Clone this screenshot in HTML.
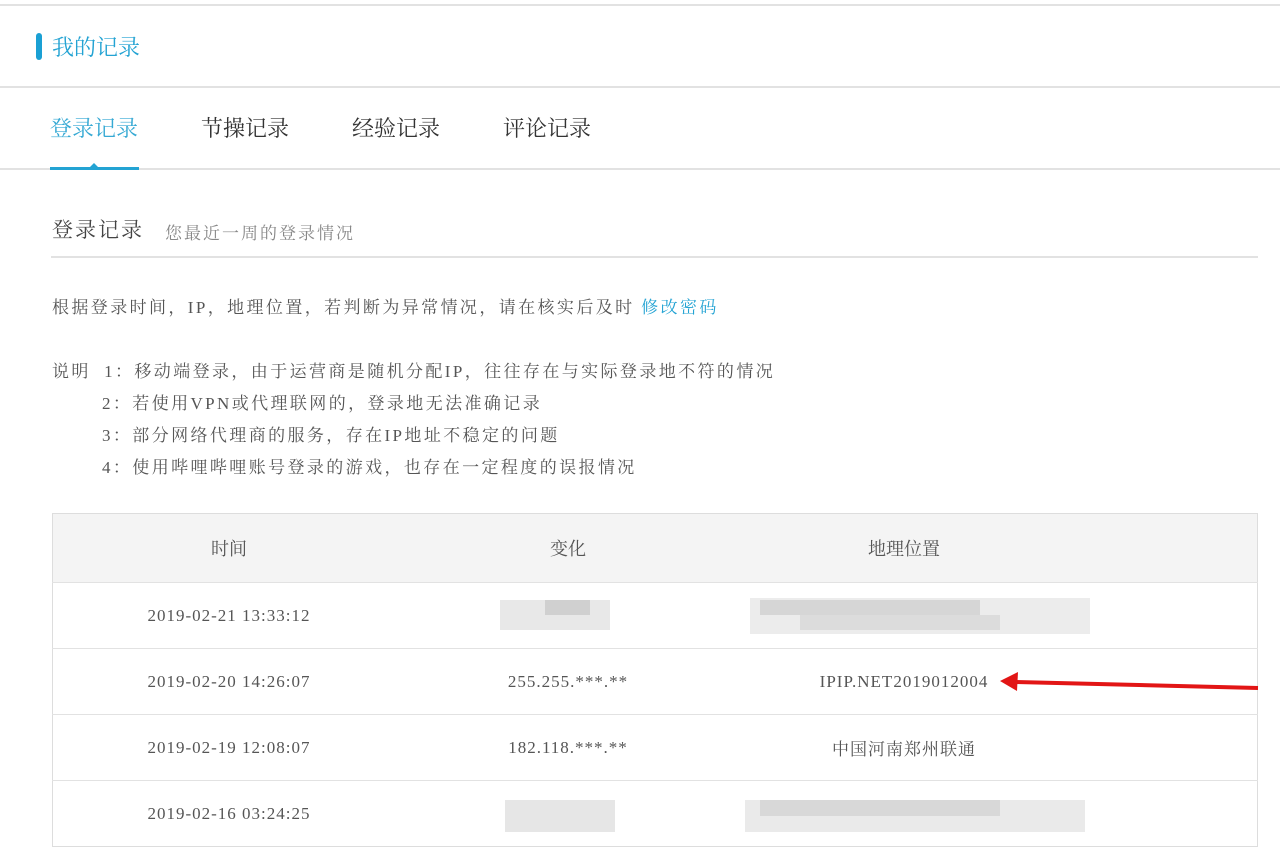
<!DOCTYPE html>
<html><head><meta charset="utf-8"><style>
body{margin:0;width:1280px;height:854px;background:#fff;position:relative;overflow:hidden;font-family:"Liberation Serif","Noto Serif CJK SC",serif;color:#555}
.a{position:absolute;white-space:nowrap}
.hl{position:absolute;height:2px;background:#e2e2e2}
table{position:absolute;left:52px;top:513px;width:1206px;border-collapse:collapse;border:1px solid #ddd;font-size:17px;color:#555}
td,th{height:65px;text-align:center;border-bottom:1px solid #e2e2e2;font-weight:normal;padding:0}
td{letter-spacing:1px}
th{background:#f4f4f4;height:68px;font-size:18px}
.blk{position:absolute;background:#ccc}
</style></head><body>
<div class="hl" style="left:0;top:4px;width:1280px"></div>
<div class="a" style="left:36px;top:33px;width:6px;height:27px;background:#1aa0d4;border-radius:3px"></div>
<div class="a" style="left:52px;top:31px;font-size:22px;color:#23a3d3">我的记录</div>
<div class="hl" style="left:0;top:86px;width:1280px"></div>
<div class="a" style="left:50px;top:112px;font-size:22px;color:#36a9d4">登录记录</div>
<div class="a" style="left:201px;top:112px;font-size:22px;color:#333">节操记录</div>
<div class="a" style="left:352px;top:112px;font-size:22px;color:#333">经验记录</div>
<div class="a" style="left:503px;top:112px;font-size:22px;color:#333">评论记录</div>
<div class="hl" style="left:0;top:168px;width:1280px"></div>
<div class="a" style="left:50px;top:167px;width:89px;height:3px;background:#23a3d3"></div>
<div class="a" style="left:90px;top:163px;width:0;height:0;border-left:4px solid transparent;border-right:4px solid transparent;border-bottom:4px solid #23a3d3"></div>
<div class="a" style="left:52px;top:214px;font-size:21px;color:#444;letter-spacing:2px">登录记录</div>
<div class="a" style="left:165px;top:219px;font-size:17px;color:#888;letter-spacing:2px">您最近一周的登录情况</div>
<div class="hl" style="left:51px;top:256px;width:1207px"></div>
<div class="a" style="left:52px;top:293px;font-size:17px;letter-spacing:2.4px">根据登录时间，IP，地理位置，若判断为异常情况，请在核实后及时 <span style="color:#23a3d3">修改密码</span></div>
<div class="a" style="left:52px;top:356px;font-size:17px;line-height:32px;letter-spacing:2.4px">说明&nbsp;&nbsp;1：移动端登录，由于运营商是随机分配IP，往往存在与实际登录地不符的情况<br>
<span style="padding-left:50px">2：若使用VPN或代理联网的，登录地无法准确记录</span><br>
<span style="padding-left:50px">3：部分网络代理商的服务，存在IP地址不稳定的问题</span><br>
<span style="padding-left:50px">4：使用哔哩哔哩账号登录的游戏，也存在一定程度的误报情况</span></div>
<table>
<tr><th style="width:352px">时间</th><th style="width:326px">变化</th><th style="width:346px">地理位置</th><th></th></tr>
<tr><td>2019-02-21 13:33:12</td><td></td><td></td><td></td></tr>
<tr><td>2019-02-20 14:26:07</td><td>255.255.***.**</td><td>IPIP.NET2019012004</td><td></td></tr>
<tr><td>2019-02-19 12:08:07</td><td>182.118.***.**</td><td>中国河南郑州联通</td><td></td></tr>
<tr><td style="border:0">2019-02-16 03:24:25</td><td style="border:0"></td><td style="border:0"></td><td style="border:0"></td></tr>
</table>
<div class="blk" style="left:500px;top:600px;width:110px;height:30px;background:#e8e8e8"></div>
<div class="blk" style="left:545px;top:600px;width:45px;height:15px;background:#d0d0d0"></div>
<div class="blk" style="left:750px;top:598px;width:340px;height:36px;background:#ececec"></div>
<div class="blk" style="left:760px;top:600px;width:220px;height:15px;background:#d6d6d6"></div>
<div class="blk" style="left:800px;top:615px;width:200px;height:15px;background:#dcdcdc"></div>
<div class="blk" style="left:505px;top:800px;width:110px;height:32px;background:#e6e6e6"></div>
<div class="blk" style="left:745px;top:800px;width:340px;height:32px;background:#eaeaea"></div>
<div class="blk" style="left:760px;top:800px;width:240px;height:16px;background:#d8d8d8"></div>
<svg class="a" style="left:0;top:0" width="1280" height="854"><line x1="1258" y1="688" x2="1015" y2="682" stroke="#e21515" stroke-width="4"/><polygon points="1000,681 1018,672 1017,691" fill="#e21515"/></svg>
</body></html>
